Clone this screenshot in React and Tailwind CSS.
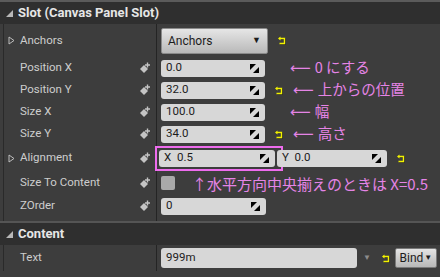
import React from 'react';

const Keyframe = () => (
  <svg width="12" height="12" viewBox="0 0 12 12" className="ml-auto mr-[5px]">
    <path d="M5 3 L9 7 L5 11 L1 7 Z" fill="#c4c4c4" />
    <path d="M8.5 0.5 V5.5 M6 3 H11" stroke="#c4c4c4" strokeWidth="1.4" />
  </svg>
);

const Spin = () => (
  <svg width="9" height="9" viewBox="0 0 9 9">
    <path d="M0 0 H6 L0 6 Z" fill="#000" />
    <path d="M9 3 V9 H3 Z" fill="#000" />
  </svg>
);

const Reset = ({ className = '' }) => (
  <svg width="10" height="9" viewBox="0 0 10 9" className={`shrink-0 ${className}`}>
    <path d="M2.5 2.5 H7.5 V7.5 H2.5" fill="none" stroke="#202020" strokeWidth="1.5" transform="translate(0.6 0.6)" />
    <path d="M2.5 2.5 H7.5 V7.5 H2.5" fill="none" stroke="#f2f200" strokeWidth="1.4" />
    <path d="M1 2.5 L3.5 0.5 V4.5 Z" fill="#f2f200" />
  </svg>
);

const Expander = () => (
  <svg width="7" height="9" viewBox="0 0 7 9">
    <path d="M1 1 L6 4.5 L1 8 Z" fill="none" stroke="#bdbdbd" strokeWidth="1" />
  </svg>
);

const Field = ({ value, w, spin = true }) => (
  <div
    className={`${w} h-[17px] rounded-[3px] bg-[#d7d7d7] flex items-center justify-between pl-[5px] pr-[6px] text-[11.5px] text-[#1c1c1c]`}
  >
    <span>{value}</span>
    {spin && <Spin />}
  </div>
);

const Note = ({ children, className = '' }) => (
  <span
    className={`text-[14.5px] text-[#e584e6] leading-none whitespace-nowrap ${className}`}
    style={{ fontFamily: '"Noto Sans CJK JP", "DejaVu Sans", sans-serif' }}
  >
    {children}
  </span>
);

const Row = ({ label, h, expander, keyframe = true, children }) => (
  <div className={`flex ${h}`}>
    <div className="w-[153px] shrink-0 flex items-center border-r border-[#242424]">
      <div className="w-[16px] pl-[4px] flex items-center">{expander && <Expander />}</div>
      <span className="text-[11.5px] text-[#cdcdcd]">{label}</span>
      {keyframe && <Keyframe />}
    </div>
    <div className="flex-1 flex items-center pl-[4px] gap-[9px]">{children}</div>
  </div>
);

const Header = ({ title }) => (
  <div className="h-[22px] bg-[#2f2f2f] flex items-center pl-[6px] gap-[5px]">
    <svg width="7" height="7" viewBox="0 0 7 7">
      <path d="M7 0 V7 H0 Z" fill="#b8b8b8" />
    </svg>
    <span className="text-[13px] font-bold text-[#e6e6e6]">{title}</span>
  </div>
);

const Arrow = () => (
  <span className="mr-[4px]" style={{ fontFamily: '"DejaVu Sans", sans-serif' }}>
    ⟵
  </span>
);

const App = () => {
  return (
    <div className="w-[440px] h-[277px] overflow-hidden bg-[#3d3d3d] font-['Roboto',sans-serif]">
      <div className="h-[2px] bg-[#5b5b5b]" />
      <Header title="Slot (Canvas Panel Slot)" />
      <div className="ml-[3px] border-l border-[#2a2a2a]">
        <Row label="Anchors" h="h-[33px]" expander keyframe={false}>
          <div className="w-[107px] h-[26px] rounded-[2px] border border-[#8a8a8a] bg-gradient-to-b from-[#e6e6e6] to-[#b9b9b9] flex items-center justify-between px-[6px] text-[12px] text-[#1c1c1c]">
            <span>Anchors</span>
            <span className="text-[9px]">▼</span>
          </div>
          <Reset />
        </Row>
        <Row label="Position X" h="h-[22px]">
          <Field value="0.0" w="w-[104px]" />
          <Note className="ml-[16px]"><Arrow />0 にする</Note>
        </Row>
        <Row label="Position Y" h="h-[22px]">
          <Field value="32.0" w="w-[104px]" />
          <Reset />
          <Note><Arrow />上からの位置</Note>
        </Row>
        <Row label="Size X" h="h-[22px]">
          <Field value="100.0" w="w-[104px]" />
          <Note className="ml-[16px]"><Arrow />幅</Note>
        </Row>
        <Row label="Size Y" h="h-[22px]">
          <Field value="34.0" w="w-[104px]" />
          <Reset />
          <Note><Arrow />高さ</Note>
        </Row>
        <Row label="Alignment" h="h-[26px]" expander>
          <div className="flex items-center gap-[3px] -ml-[6px]">
            <div className="border-2 border-[#ee6cee] p-[2px] pr-[6px]">
              <Field value={<span>X&nbsp;&nbsp;0.5</span>} w="w-[116px]" />
            </div>
            <div className="-ml-[9px]">
              <Field value={<span>Y&nbsp;&nbsp;0.0</span>} w="w-[110px]" />
            </div>
          </div>
          <Reset />
        </Row>
        <Row label="Size To Content" h="h-[24px]">
          <div className="w-[14px] h-[14px] rounded-[2px] bg-[#a9a9a9]" />
          <Note className="ml-[8px] text-[15px]">↑水平方向中央揃えのときは X=0.5</Note>
        </Row>
        <Row label="ZOrder" h="h-[22px]">
          <Field value="0" w="w-[105px]" />
        </Row>
        <div className="h-[4px] flex">
          <div className="w-[153px] border-r border-[#242424]" />
        </div>
      </div>
      <div className="h-[2px] bg-[#555555]" />
      <Header title="Content" />
      <div className="ml-[3px] border-l border-[#2a2a2a]">
        <Row label="Text" h="h-[26px]" keyframe={false}>
          <div className="w-[196px] h-[20px] rounded-[3px] bg-[#d7d7d7] flex items-center pl-[5px] text-[11.5px] text-[#1c1c1c]">
            999m
          </div>
          <span className="text-[8px] text-[#8c8c8c] -ml-[3px]">▼</span>
          <Reset className="ml-[1px]" />
          <div className="w-[42px] h-[20px] rounded-[2px] border border-[#7a7a7a] bg-gradient-to-b from-[#e4e4e4] to-[#b8b8b8] flex items-center justify-center gap-[1px] text-[12px] text-[#1c1c1c] -ml-[5px]">
            <span>Bind</span>
            <span className="text-[8px]">▼</span>
          </div>
        </Row>
      </div>
    </div>
  );
};

export default App;
